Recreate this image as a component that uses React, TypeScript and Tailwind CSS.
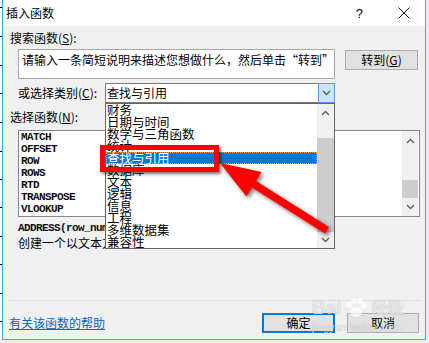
import React from "react";

const categories = [
  "财务",
  "日期与时间",
  "数学与三角函数",
  "统计",
  "查找与引用",
  "数据库",
  "文本",
  "逻辑",
  "信息",
  "工程",
  "多维数据集",
  "兼容性",
];

const functions = ["MATCH", "OFFSET", "ROW", "ROWS", "RTD", "TRANSPOSE", "VLOOKUP"];

function Chevron({ up = false }: { up?: boolean }) {
  return (
    <svg width="9" height="6" viewBox="0 0 9 6">
      <polyline
        points={up ? "1,5 4.5,1.5 8,5" : "1,1 4.5,4.5 8,1"}
        fill="none"
        stroke="#606060"
        strokeWidth="1.4"
      />
    </svg>
  );
}

export default function App() {
  return (
    <div className="relative w-[429px] h-[343px] overflow-hidden bg-[#ececec] flex font-['Noto_Sans_CJK_SC',sans-serif] text-black">
      {/* spreadsheet edge behind the dialog */}
      <div className="w-[2px] h-full bg-white">
        <svg width="2" height="343">
          {[7, 36, 65, 93, 122, 151, 179, 207, 236, 264, 293, 321].map((y) => (
            <rect key={y} x="0" y={y} width="2" height="1" fill="#000" />
          ))}
        </svg>
      </div>

      {/* dialog window */}
      <div className="w-[424px] h-[340px] border-x border-b border-[#2bb5cf] flex flex-col">
        {/* title bar */}
        <div className="h-[26px] bg-white flex items-center pl-[3px] text-[12px] shrink-0">
          <span>插入函数</span>
          <span className="ml-auto mr-[35px] font-['Liberation_Sans',sans-serif] text-[13px] leading-none">?</span>
          <svg width="12" height="12" viewBox="0 0 12 12" className="mr-[15px]">
            <path d="M0.5 0.5 L11.5 11.5 M11.5 0.5 L0.5 11.5" stroke="#111" strokeWidth="1" />
          </svg>
        </div>

        {/* body */}
        <div className="flex-1 bg-[#f0f0f0] flex flex-col text-[12px] leading-[16px] pt-[4px]">
          <div className="pl-[7px]">
            搜索函数(<span className="underline">S</span>):
          </div>

          <div className="flex mt-[3px]">
            <div className="ml-[15px] w-[317px] h-[30px] bg-white border border-[#a6a6a6] pl-[3px] pt-[2px] whitespace-nowrap overflow-hidden">
              请输入一条简短说明来描述您想做什么，然后单击“转到”
            </div>
            <button className="ml-[10px] mt-[1px] w-[73px] h-[20px] bg-[#e1e1e1] border border-[#adadad] text-[12px] leading-[18px]">
              转到(<span className="underline">G</span>)
            </button>
          </div>

          <div className="flex items-center mt-[4px] h-[20px]">
            <span className="ml-[15px] w-[87px]">
              或选择类别(<span className="underline">C</span>):
            </span>
            <div className="w-[230px] h-[20px] bg-white border border-[#7a7a7a] flex items-center">
              <span className="flex-1 pl-[1px]">查找与引用</span>
              <div className="w-[17px] h-[20px] -my-px -mr-px bg-[#cce4f7] border border-[#569de5] flex items-center justify-center">
                <Chevron />
              </div>
            </div>
          </div>

          <div className="pl-[7px] mt-[6px]">
            选择函数(<span className="underline">N</span>):
          </div>

          <div className="mt-[5px] ml-[15px] w-[402px] h-[87px] bg-white border border-[#828790] flex">
            <div className="flex-1 pl-[2px] font-['Liberation_Mono',monospace] text-[11px] tracking-[-0.6px] font-bold leading-[12px] text-[#111]">
              {functions.map((f) => (
                <div key={f}>{f}</div>
              ))}
            </div>
            <div className="w-[16px] mr-[1px] bg-[#f0f0f0] flex flex-col">
              <div className="h-[19px] flex items-center justify-center">
                <Chevron up />
              </div>
              <div className="h-[30px]" />
              <div className="h-[18px] bg-[#cdcdcd]" />
              <div className="h-[18px] flex items-center justify-center">
                <Chevron />
              </div>
            </div>
          </div>

          <div className="ml-[15px] mt-[4px] font-['Liberation_Mono',monospace] text-[11px] tracking-[-0.6px] font-bold leading-[14px] whitespace-nowrap text-[#111]">
            ADDRESS(row_num,column_num,abs_num,a1,sheet_text)
          </div>
          <div className="ml-[15px] whitespace-nowrap">创建一个以文本方式对工作簿中某一单元格的引用</div>

          <div className="mt-[49px] ml-[6px] w-[411px] h-px bg-[#dcdcdc]" />

          <div className="mt-[12px] h-[20px] flex items-center">
            <span className="ml-[6px] text-[#0066cc] underline">有关该函数的帮助</span>
            <button className="ml-auto w-[73px] h-[20px] bg-[#e1e1e1] border-2 border-[#0078d7] leading-[16px]">
              确定
            </button>
            <button className="ml-[12px] mr-[6px] w-[72px] h-[20px] bg-[#e1e1e1] border border-[#adadad] leading-[18px]">
              取消
            </button>
          </div>
        </div>
      </div>

      {/* open category dropdown */}
      <div className="absolute left-[105px] top-[103px] w-[230px] h-[146px] bg-white border border-[#646464] flex text-[12.5px] leading-[12px]">
        <div className="flex-1 flex flex-col">
          {categories.map((c) =>
            c === "查找与引用" ? (
              <div
                key={c}
                className="h-[12px] pl-[1px] bg-[#0078d7] text-white outline outline-1 outline-dotted outline-[#f0a050] -outline-offset-1 whitespace-nowrap"
              >
                {c}
              </div>
            ) : (
              <div key={c} className="h-[12px] pl-[1px] whitespace-nowrap">
                {c}
              </div>
            )
          )}
        </div>
        <div className="w-[17px] bg-[#f0f0f0] flex flex-col">
          <div className="h-[17px] flex items-center justify-center">
            <Chevron up />
          </div>
          <div className="h-[17px]" />
          <div className="h-[94px] bg-[#cdcdcd]" />
          <div className="h-[16px] flex items-center justify-center">
            <Chevron />
          </div>
        </div>
      </div>

      {/* red highlight box */}
      <div className="absolute left-[100px] top-[145px] w-[119px] h-[27px] border-[5px] border-[#ff0000] shadow-[2px_2px_3px_rgba(0,0,0,0.55)]" />

      {/* red arrow */}
      <svg
        className="absolute left-0 top-0 pointer-events-none drop-shadow-[2px_2px_2px_rgba(0,0,0,0.55)]"
        width="429"
        height="343"
      >
        <polygon
          points="220,163 261.5,172 256,181 329,227 325,233.5 252,187.5 246.5,196.5"
          fill="#ff0000"
        />
      </svg>

      {/* watermark */}
      <div className="absolute left-[312px] top-[298px] flex flex-col items-start text-white/70 pointer-events-none [text-shadow:0_0_1px_rgba(0,0,0,0.3)]">
        <div className="flex items-center gap-[2px] font-['Liberation_Sans',sans-serif] text-[19px] leading-[20px] font-bold">
          <span>Bai</span>
          <svg width="24" height="20" viewBox="0 0 24 20" className="opacity-70">
            <circle cx="5" cy="7" r="3" fill="#fff" />
            <circle cx="10" cy="3" r="3" fill="#fff" />
            <circle cx="16" cy="3" r="3" fill="#fff" />
            <circle cx="20" cy="8" r="3" fill="#fff" />
            <ellipse cx="12" cy="14" rx="6" ry="5" fill="#fff" />
          </svg>
          <span className="text-[16px] ml-[2px]">经验</span>
        </div>
        <div className="text-[11px] leading-[14px] font-['Liberation_Sans',sans-serif] mt-[2px]">jingyan.baidu.com</div>
      </div>
    </div>
  );
}
